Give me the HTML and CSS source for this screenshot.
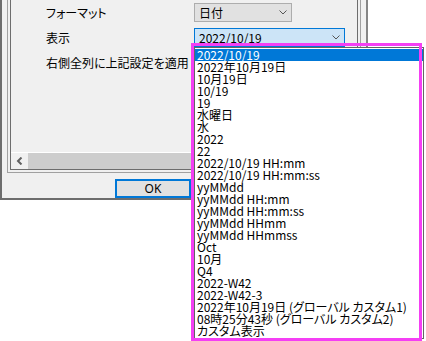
FILE: index.html
```html
<!DOCTYPE html>
<html>
<head>
    <title>表示形式の設定</title>
    <link rel="stylesheet" href="styles.css">
</head>
<body>
    <div class="screen">
        <div class="dialog">
            <div class="group">
                <div class="panel">
                    <div class="rows">
                        <div class="row">
                            <span class="label">フォーマット</span>
                            <div class="combo combo-short">
                                <span>日付</span>
                                <svg class="chevron" width="8" height="5" viewBox="0 0 8 5"><polyline points="0.5,0.5 4,4 7.5,0.5" fill="none" stroke="#555" stroke-width="1"/></svg>
                            </div>
                        </div>
                        <div class="row">
                            <span class="label">表示</span>
                            <div class="combo combo-active">
                                <span>2022/10/19</span>
                                <svg class="chevron" width="8" height="5" viewBox="0 0 8 5"><polyline points="0.5,0.5 4,4 7.5,0.5" fill="none" stroke="#555" stroke-width="1"/></svg>
                            </div>
                        </div>
                        <div class="row">
                            <span class="label">右側全列に上記設定を適用</span>
                        </div>
                    </div>
                    <div class="hscroll">
                        <span class="scroll-arrow">
                            <svg width="7" height="8" viewBox="0 0 7 8"><polyline points="5.5,0.5 2,4 5.5,7.5" fill="none" stroke="#606060" stroke-width="2"/></svg>
                        </span>
                        <span class="scroll-thumb"></span>
                    </div>
                </div>
            </div>
            <div class="buttons">
                <button class="btn">OK</button>
            </div>
        </div>

        <ul class="dropdown">
            <li class="selected">2022/10/19</li>
            <li>2022年10月19日</li>
            <li>10月19日</li>
            <li>10/19</li>
            <li>19</li>
            <li>水曜日</li>
            <li>水</li>
            <li>2022</li>
            <li>22</li>
            <li>2022/10/19 HH:mm</li>
            <li>2022/10/19 HH:mm:ss</li>
            <li>yyMMdd</li>
            <li>yyMMdd HH:mm</li>
            <li>yyMMdd HH:mm:ss</li>
            <li>yyMMdd HHmm</li>
            <li>yyMMdd HHmmss</li>
            <li>Oct</li>
            <li>10月</li>
            <li>Q4</li>
            <li>2022-W42</li>
            <li>2022-W42-3</li>
            <li>2022年10月19日 (グローバル カスタム1)</li>
            <li>08時25分43秒 (グローバル カスタム2)</li>
            <li>カスタム表示</li>
        </ul>
        <div class="annotation"></div>
    </div>
</body>
</html>
```

FILE: styles.css
```css
:root {
    --dialog-bg: #f0f0f0;
    --frame: #6d6d6d;
    --groupline: #a0a0a0;
    --accent: #0078d7;
    --accent-light: #cce4f7;
    --button-bg: #e1e1e1;
    --marker: #f43ff4;
}
* {
    box-sizing: border-box;
}
body {
    margin: 0;
    background: #ffffff;
    font-family: "Noto Sans CJK JP", "Noto Sans", sans-serif;
    font-size: 12px;
    color: #000000;
    font-feature-settings: "palt";
}
.screen {
    position: relative;
    width: 426px;
    height: 341px;
    overflow: hidden;
}

/* dialog behind the popup */
.dialog {
    width: 368px;
    height: 200px;
    background: var(--dialog-bg);
    border-left: 2px solid var(--frame);
    border-right: 2px solid #858585;
    border-bottom: 2px solid var(--frame);
    display: flex;
    flex-direction: column;
}
.group {
    margin-left: 5px;
    width: 354px;
    height: 173px;
    border: 1px solid var(--groupline);
    border-top: none;
    padding: 0 2px 2px 2px;
}
.panel {
    height: 170px;
    border: 1px solid var(--frame);
    border-top: none;
    display: flex;
    flex-direction: column;
}
.rows {
    flex: 1;
    padding: 3px 0 0 35px;
    display: flex;
    flex-direction: column;
    gap: 6px;
}
.row {
    height: 19px;
    display: flex;
    align-items: center;
}
.label {
    width: 148px;
    line-height: 12px;
}
.combo {
    height: 19px;
    display: flex;
    align-items: center;
    justify-content: space-between;
    padding: 0 4px 0 4px;
    border: 1px solid #adadad;
    background: var(--button-bg);
    line-height: 12px;
}
.combo-short {
    width: 98px;
}
.combo-active {
    width: 151px;
    border-color: var(--accent);
    background: var(--accent-light);
}
.chevron {
    display: block;
}
.hscroll {
    height: 17px;
    border-top: 1px solid #ffffff;
    display: flex;
}
.scroll-arrow {
    width: 17px;
    display: flex;
    align-items: center;
    justify-content: center;
}
.scroll-thumb {
    width: 200px;
    background: #cdcdcd;
}
.buttons {
    padding: 6px 0 0 113px;
}
.btn {
    width: 76px;
    height: 19px;
    padding: 0;
    border: 2px solid var(--accent);
    background: var(--button-bg);
    font-family: "Noto Sans", sans-serif;
    font-size: 12px;
    line-height: 13px;
    color: #000000;
}

/* open combo list */
.dropdown {
    position: absolute;
    left: 194px;
    top: 47px;
    width: 230px;
    height: 292px;
    margin: 0;
    padding: 1px 0;
    list-style: none;
    background: #ffffff;
    border: 1px solid #646464;
}
.dropdown li {
    height: 12px;
    line-height: 12px;
    padding-left: 2px;
    white-space: nowrap;
}
.dropdown li.selected {
    background: var(--accent);
    color: #ffffff;
}

/* highlight frame drawn over the screenshot */
.annotation {
    position: absolute;
    left: 191px;
    top: 43px;
    width: 231px;
    height: 298px;
    border: 3px solid var(--marker);
}
```
